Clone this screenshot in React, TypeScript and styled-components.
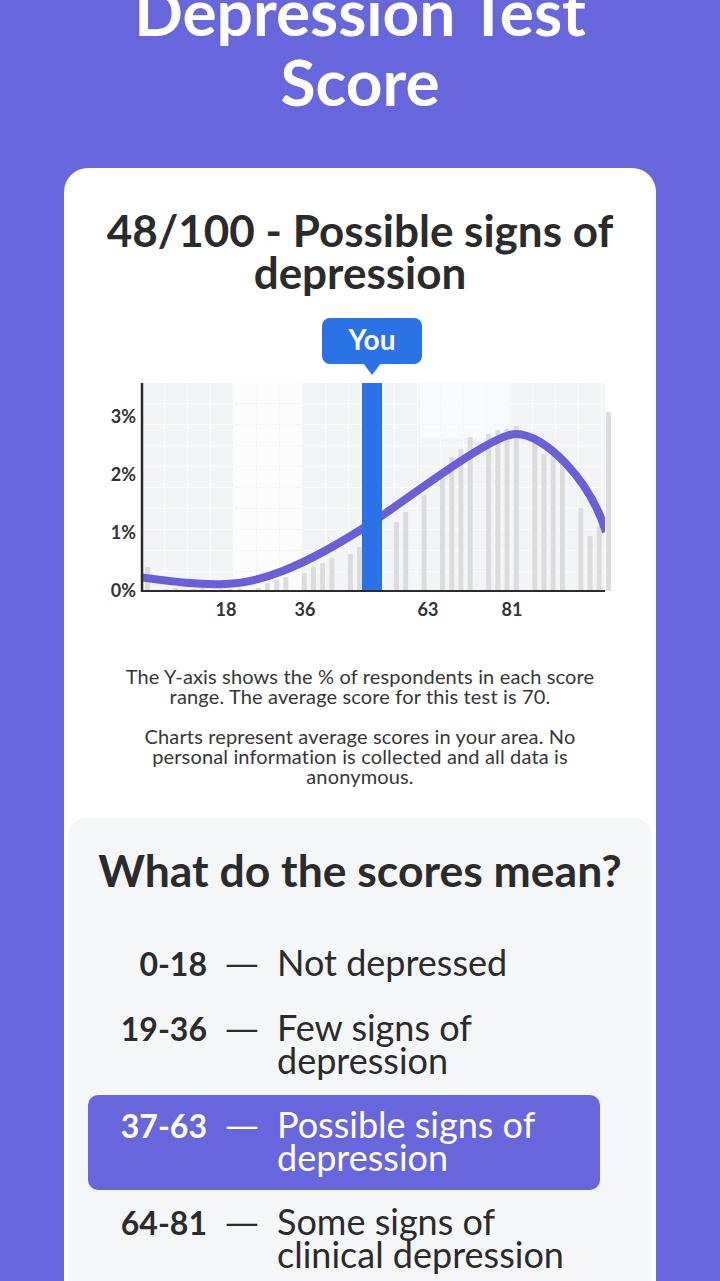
import React from "react";
import styled, { createGlobalStyle } from "styled-components";

const Purple = "#6866dc";
const Ink = "#2b2b2b";
const Blue = "#2a72e6";
const Curve = "#6a5fd8";

const GlobalStyle = createGlobalStyle`
  html, body {
    margin: 0;
    padding: 0;
    background: ${Purple};
  }
  body {
    font-family: Lato, "Noto Sans", sans-serif;
    color: ${Ink};
  }
`;

const Page = styled.div`
  display: flex;
  flex-direction: column;
  align-items: center;
  padding: 0 64px;
`;

const PageTitle = styled.h1`
  margin: -23px 0 51px;
  font-size: 64px;
  line-height: 70px;
  font-weight: 700;
  color: #fff;
  text-align: center;
`;

const Card = styled.section`
  width: 100%;
  box-sizing: border-box;
  background: #fff;
  border-radius: 24px 24px 0 0;
  padding: 41px 5px 0;
`;

const ResultHeading = styled.h2`
  margin: 0;
  font-size: 44px;
  line-height: 42px;
  font-weight: 700;
  text-align: center;
`;

const ChartSvg = styled.svg`
  display: block;
  margin-top: 19px;
`;

const Notes = styled.div`
  max-width: 480px;
  margin: 42px auto 0;
  padding-bottom: 32px;
  font-size: 20px;
  line-height: 20px;
  letter-spacing: 0.15px;
  color: #363636;
  text-align: center;

  p {
    margin: 0;
  }
  p + p {
    margin-top: 20px;
  }
`;

const Meaning = styled.div`
  background: #f4f6f8;
  border-radius: 16px 16px 0 0;
  padding: 31px 0 48px;
`;

const MeaningHeading = styled.h3`
  margin: 0 0 42px;
  font-size: 44.5px;
  line-height: 42px;
  font-weight: 700;
  text-align: center;
`;

const ScaleList = styled.div`
  display: flex;
  flex-direction: column;
  gap: 2px;
  margin: 0 51px 0 19px;
`;

const ScaleRow = styled.div<{ $active?: boolean }>`
  display: grid;
  grid-template-columns: 119px 70px 1fr;
  align-items: baseline;
  padding: 13px 12px 16px 0;
  border-radius: 10px;
  background: ${(p) => (p.$active ? Purple : "transparent")};
  color: ${(p) => (p.$active ? "#fff" : Ink)};
  line-height: 33px;
`;

const Range = styled.span`
  font-size: 32px;
  font-weight: 700;
  text-align: right;
`;

const Dash = styled.span`
  font-size: 34px;
  text-align: center;
  transform: scaleX(1.35);
`;

const Label = styled.span`
  font-size: 36px;
  font-weight: 400;
`;

// [column index, bar height in px]
const bars: [number, number][] = [
  [0, 24], [2, 2], [3, 3], [5, 2], [6, 3], [8, 2], [9, 2], [10, 3], [12, 3],
  [13, 8], [14, 11], [15, 14], [17, 18], [18, 24], [19, 28], [20, 33],
  [22, 37], [23, 44], [27, 69], [28, 79], [30, 96], [32, 113], [33, 134],
  [34, 142], [35, 154], [37, 157], [38, 161], [39, 162], [40, 165],
  [42, 148], [43, 137], [44, 136], [45, 131], [47, 83], [48, 55], [49, 65],
  [50, 179],
];

const plot = { left: 142, right: 605, top: 383, bottom: 591 };
const yTicks = [
  { label: "3%", y: 423 },
  { label: "2%", y: 481 },
  { label: "1%", y: 539 },
  { label: "0%", y: 597 },
];
const xTicks = [
  { label: "18", x: 226 },
  { label: "36", x: 305 },
  { label: "63", x: 428 },
  { label: "81", x: 512 },
];

function DistributionChart() {
  const w = plot.right - plot.left;
  const h = plot.bottom - plot.top;
  return (
    <ChartSvg width="582" height="312" viewBox="69 312 582 312">
      <defs>
        <pattern id="gridDark" x={plot.left} y={plot.top} width="23" height="21" patternUnits="userSpaceOnUse">
          <rect width="23" height="21" fill="#f3f4f6" />
          <path d="M23 0V21M0 21H23" stroke="#fff" strokeWidth="1.5" />
        </pattern>
        <pattern id="gridLight" x={plot.left} y={plot.top} width="23" height="21" patternUnits="userSpaceOnUse">
          <rect width="23" height="21" fill="#fcfcfd" />
          <path d="M23 0V21M0 21H23" stroke="#eeeff1" strokeWidth="1.2" />
        </pattern>
        <clipPath id="plotClip">
          <rect x={plot.left} y={plot.top - 10} width={w} height={h + 10} />
        </clipPath>
      </defs>

      <rect x={plot.left} y={plot.top} width={w} height={h} fill="url(#gridDark)" />
      <rect x="234" y={plot.top} width="69" height={h} fill="url(#gridLight)" />
      <rect x="420" y={plot.top} width="90" height="55" fill="url(#gridLight)" opacity="0.7" />

      {bars.map(([i, bh]) => (
        <rect key={i} x={145 + i * 9.22} y={plot.bottom - bh} width="5" height={bh} rx="1" fill="#dcdcdc" />
      ))}

      <path
        clipPath="url(#plotClip)"
        d="M138,577 C175,582 200,585 225,584 C260,583 300,568 362,529 C402,504 490,434 516,434 C545,434 590,480 606,532"
        fill="none"
        stroke={Curve}
        strokeWidth="8"
      />

      <rect x="362" y={plot.top} width="20" height={h} fill={Blue} />

      <line x1={plot.left} y1={plot.top} x2={plot.left} y2={plot.bottom + 1} stroke="#2b2b2b" strokeWidth="2.5" />
      <line x1={plot.left} y1={plot.bottom} x2={plot.right} y2={plot.bottom} stroke="#2b2b2b" strokeWidth="2" />

      <g fontFamily="Lato, sans-serif" fontWeight="700" fontSize="18" fill="#333">
        {yTicks.map((t) => (
          <text key={t.label} x="136" y={t.y} textAnchor="end">{t.label}</text>
        ))}
        {xTicks.map((t) => (
          <text key={t.label} x={t.x} y="616" textAnchor="middle">{t.label}</text>
        ))}
      </g>

      <g>
        <rect x="322" y="318" width="100" height="46" rx="8" fill={Blue} />
        <path d="M363 363 L381 363 L372 375 Z" fill={Blue} />
        <text x="372" y="350" textAnchor="middle" fontFamily="Lato, sans-serif" fontWeight="700" fontSize="28" fill="#fff">
          You
        </text>
      </g>
    </ChartSvg>
  );
}

const scale = [
  { range: "0-18", label: "Not depressed" },
  { range: "19-36", label: "Few signs of depression" },
  { range: "37-63", label: "Possible signs of depression", active: true },
  { range: "64-81", label: "Some signs of clinical depression" },
];

export default function App() {
  return (
    <>
      <GlobalStyle />
      <Page>
        <PageTitle>Depression Test Score</PageTitle>
        <Card>
          <ResultHeading>48/100 - Possible signs of depression</ResultHeading>
          <DistributionChart />
          <Notes>
            <p>The Y-axis shows the % of respondents in each score range. The average score for this test is 70.</p>
            <p>Charts represent average scores in your area. No personal information is collected and all data is anonymous.</p>
          </Notes>
          <Meaning>
            <MeaningHeading>What do the scores mean?</MeaningHeading>
            <ScaleList>
              {scale.map((s) => (
                <ScaleRow key={s.range} $active={s.active}>
                  <Range>{s.range}</Range>
                  <Dash>—</Dash>
                  <Label>{s.label}</Label>
                </ScaleRow>
              ))}
            </ScaleList>
          </Meaning>
        </Card>
      </Page>
    </>
  );
}
